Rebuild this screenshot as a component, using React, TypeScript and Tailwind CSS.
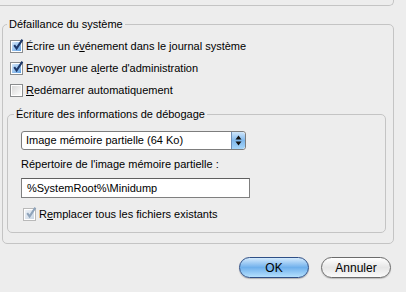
import React from "react";

function Check({ checked, disabled }: { checked?: boolean; disabled?: boolean }) {
  const inner = checked
    ? disabled
      ? "bg-linear-to-br from-[#eef2f7] to-[#c9d6e4]"
      : "bg-linear-to-br from-[#d8e9f9] to-[#5b9ee2]"
    : "bg-linear-to-br from-[#d9d9d9] to-[#fcfcfc]";
  return (
    <span
      className={`relative flex h-[13px] w-[13px] shrink-0 items-center justify-center border bg-white ${
        disabled ? "border-[#b9b9b9]" : "border-[#8a8c8e]"
      }`}
    >
      <span className={`h-[9px] w-[9px] ${inner}`} />
      {checked && (
        <svg className="absolute -top-[3px] left-[1px]" width="12" height="13" viewBox="0 0 12 13">
          <path
            d="M2.2 7.2 L4.6 10.4 L10.4 1.6"
            fill="none"
            stroke={disabled ? "#8ea3ba" : "#1d3869"}
            strokeWidth="2"
          />
        </svg>
      )}
    </span>
  );
}

function Row({ children, checked, disabled }: { children: React.ReactNode; checked?: boolean; disabled?: boolean }) {
  return (
    <div className="flex h-[22px] items-center gap-[3px]">
      <Check checked={checked} disabled={disabled} />
      <span className="leading-[13px]">{children}</span>
    </div>
  );
}

export default function App() {
  return (
    <div className="h-[292px] w-[406px] overflow-hidden bg-[#ededed] font-['Liberation_Sans',Arial,sans-serif] text-[11px] text-black">
      <div className="h-[6px] w-[394px] rounded-br-[5px] border-r border-b border-[#c4c4c4]" />

      <fieldset className="ml-[2px] mt-[12px] h-[226px] w-[392px] rounded-[5px] border border-[#c4c4c4] p-0">
        <legend className="ml-[4px] px-[2px] leading-[13px]">Défaillance du système</legend>
        <div className="pl-[7px] pt-[4px]">
          <Row checked>
            Écrire un é<span className="underline">v</span>énement dans le journal système
          </Row>
          <Row checked>
            Envoyer une a<span className="underline">l</span>erte d'administration
          </Row>
          <Row>
            <span className="underline">R</span>edémarrer automatiquement
          </Row>
        </div>

        <fieldset className="ml-[4px] mt-[7px] h-[125px] w-[379px] rounded-[5px] border border-[#c4c4c4] p-0">
          <legend className="ml-[6px] px-[2px] leading-[13px]">Écriture des informations de débogage</legend>
          <div className="pl-[13px] pt-[10px]">
            <div className="flex h-[19px] w-[225px] items-stretch overflow-hidden rounded-[3px] border border-[#7d7d7d] bg-white">
              <div className="flex flex-1 items-center pl-[4px] leading-[13px]">Image mémoire partielle (64 Ko)</div>
              <div className="flex w-[14px] items-center justify-center rounded-r-[3px] border-l border-[#6e8fb8] bg-linear-to-b from-[#cfe6fb] via-[#7fb8ec] to-[#a6d6fb]">
                <svg width="7" height="11" viewBox="0 0 7 11">
                  <path d="M3.5 0.5 L6.5 4.5 L0.5 4.5 Z" fill="#111" />
                  <path d="M3.5 10.5 L6.5 6.5 L0.5 6.5 Z" fill="#111" />
                </svg>
              </div>
            </div>
            <div className="mt-[8px] leading-[13px]">Répertoire de l'image mémoire partielle :</div>
            <div className="mt-[7px] flex h-[20px] w-[229px] items-center border border-[#7f7f7f] border-t-[#5f5f5f] bg-white pl-[5px] leading-[13px]">
              %SystemRoot%\Minidump
            </div>
            <div className="ml-[2px] mt-[5px]">
              <Row checked disabled>
                R<span className="underline">e</span>mplacer tous les fichiers existants
              </Row>
            </div>
          </div>
        </fieldset>
      </fieldset>

      <div className="mt-[13px] flex justify-end gap-[12px] pr-[15px]">
        <div className="flex h-[21px] w-[70px] items-center justify-center rounded-full border border-[#2f4f86] bg-linear-to-b from-[#d4eafc] via-[#6fb0ec] to-[#b4e0fd] text-[12px] leading-[14px] shadow-[0_1px_1px_rgba(0,0,0,0.25)]">
          OK
        </div>
        <div className="flex h-[21px] w-[70px] items-center justify-center rounded-full border border-[#6b6b6b] bg-linear-to-b from-[#ffffff] via-[#e6e6e6] to-[#fafafa] text-[12px] leading-[14px] shadow-[0_1px_1px_rgba(0,0,0,0.2)]">
          Annuler
        </div>
      </div>
    </div>
  );
}
